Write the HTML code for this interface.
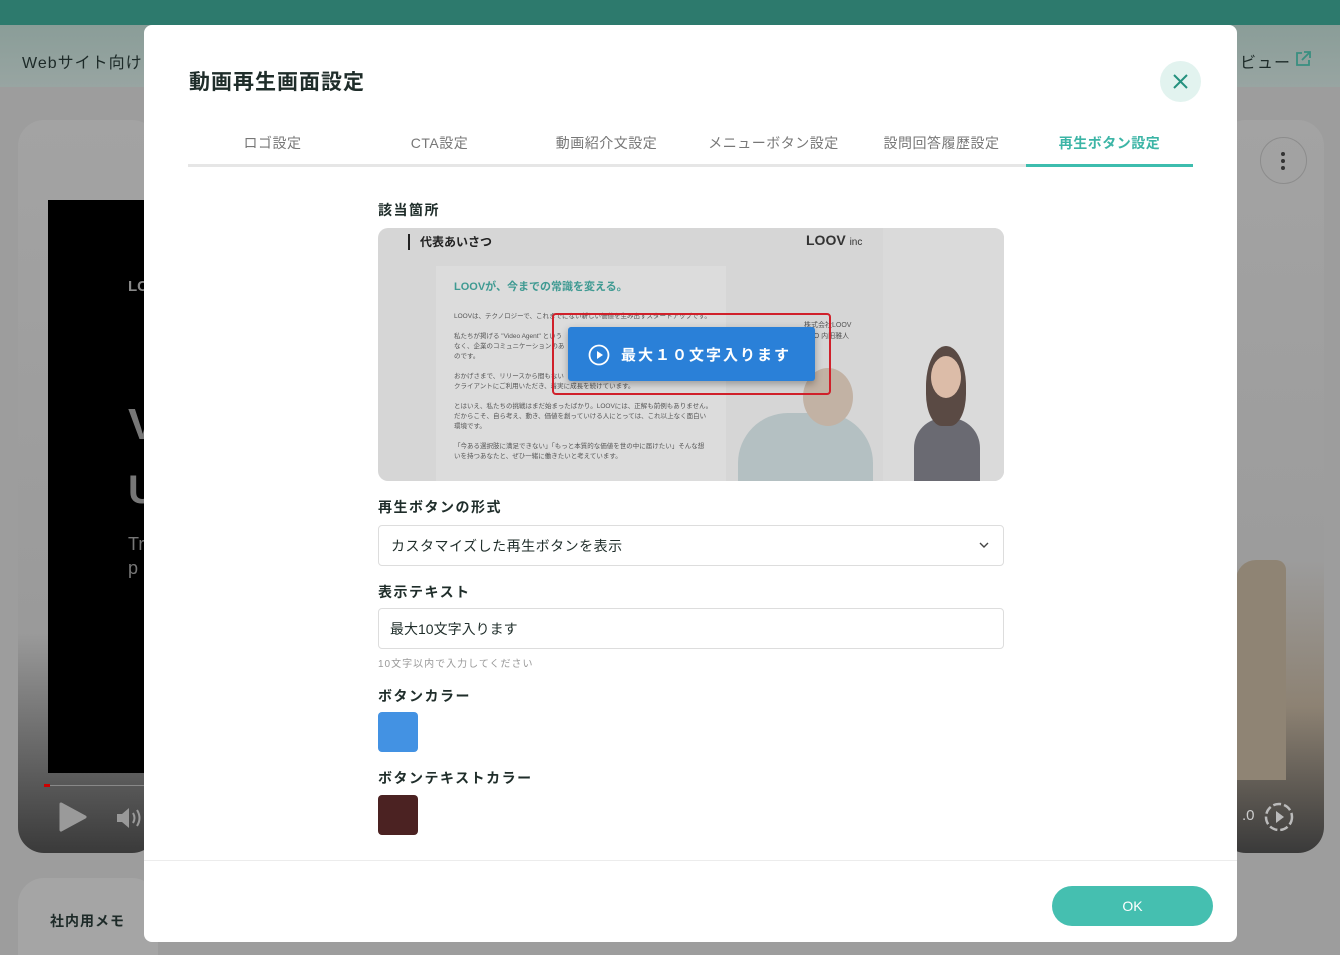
<!DOCTYPE html>
<html><head><meta charset="utf-8"><style>
*{margin:0;padding:0;box-sizing:border-box}
html,body{width:1340px;height:955px;overflow:hidden}
body{background:#9d9d9d;font-family:"Liberation Sans","Noto Sans CJK JP",sans-serif;position:relative;color:#1f2d2a}
.a{position:absolute}
.lbl{position:absolute;left:378px;font-size:14px;font-weight:bold;letter-spacing:1.5px;color:#1f2d2a}
.tab{position:absolute;top:133px;font-size:14px;color:#777;text-align:center;width:167px;letter-spacing:.5px}
</style></head><body>
<div class="a" style="left:0;top:0;width:1340px;height:25px;background:#2d7a6d"></div>
<div class="a" style="left:0;top:25px;width:1340px;height:62px;background:linear-gradient(#8a9d98,#98a5a2)"></div>
<div class="a" style="left:22px;top:49px;font-size:16px;color:#1d2a28;letter-spacing:1px">Webサイト向け</div>
<div class="a" style="left:1240px;top:49px;font-size:16px;color:#1d2a28;letter-spacing:1px">ビュー</div>
<svg class="a" style="left:1294px;top:50px" width="18" height="18" viewBox="0 0 18 18" fill="none" stroke="#3a8f80" stroke-width="1.8"><path d="M8 3H3v12h12v-5M10 2h6v6M16 2L8 10"/></svg>
<div class="a" style="left:18px;top:120px;width:140px;height:733px;border-radius:26px;background:linear-gradient(#a3a3a3 0,#9a9a9a 70%,#3a3a3a 100%)"></div>
<div class="a" style="left:48px;top:200px;width:100px;height:573px;background:#000"></div>
<div class="a" style="left:128px;top:278px;color:#888;font-weight:bold;font-size:15px">LC</div>
<div class="a" style="left:128px;top:400px;color:#777;font-weight:bold;font-size:44px">V</div>
<div class="a" style="left:128px;top:468px;color:#777;font-weight:bold;font-size:40px">U</div>
<div class="a" style="left:128px;top:532px;color:#777;font-size:18px;line-height:24px">Tr<br>p</div>
<div class="a" style="left:44px;top:784px;width:6px;height:3px;background:#c00"></div>
<div class="a" style="left:50px;top:785px;width:100px;height:1px;background:#888"></div>
<svg class="a" style="left:58px;top:802px" width="30" height="30"><path d="M3 2L27 15L3 28Z" fill="#9a9a9a" stroke="#9a9a9a" stroke-linejoin="round" stroke-width="3"/></svg>
<svg class="a" style="left:115px;top:805px" width="30" height="26"><path d="M2 9h5l7-6v20l-7-6H2Z" fill="#999"/><path d="M18 8q3 5 0 10M22 5q5 8 0 16" stroke="#999" stroke-width="2" fill="none"/></svg>
<div class="a" style="left:18px;top:878px;width:140px;height:77px;border-radius:26px 26px 0 0;background:#a5a5a5"></div>
<div class="a" style="left:50px;top:911px;font-size:14px;font-weight:bold;color:#1d2a28;letter-spacing:1px">社内用メモ</div>
<div class="a" style="left:1220px;top:120px;width:104px;height:733px;border-radius:26px;background:linear-gradient(#a3a3a3 0,#9c9c9c 60%,#8d8273 80%,#3a3a3a 100%)"></div>
<div class="a" style="left:1236px;top:560px;width:50px;height:220px;background:#8f8474;border-radius:20px 10px 0 0"></div>
<div class="a" style="left:1260px;top:137px;width:47px;height:47px;border-radius:50%;border:1px solid #8c8c8c"></div>
<div class="a" style="left:1281px;top:152px;width:4px;height:4px;border-radius:50%;background:#333;box-shadow:0 7px 0 #333,0 14px 0 #333"></div>
<div class="a" style="left:1242px;top:807px;color:#ccc;font-size:15px">.0</div>
<svg class="a" style="left:1263px;top:801px" width="32" height="32"><circle cx="16" cy="16" r="13" fill="none" stroke="#bbb" stroke-width="2.5" stroke-dasharray="8 3"/><path d="M13 10l8 6-8 6z" fill="#bbb"/></svg>
<div class="a" style="left:144px;top:25px;width:1093px;height:917px;background:#fff;border-radius:8px"></div>
<div class="a" style="left:189px;top:66px;font-size:21px;font-weight:bold;color:#1f2d2a;letter-spacing:1px">動画再生画面設定</div>
<div class="a" style="left:1160px;top:61px;width:41px;height:41px;border-radius:50%;background:#e2f3ef"></div>
<svg class="a" style="left:1172px;top:73px" width="17" height="17"><path d="M2 2L15 15M15 2L2 15" stroke="#25917f" stroke-width="2"/></svg>
<div class="tab" style="left:189px">ロゴ設定</div>
<div class="tab" style="left:356px">CTA設定</div>
<div class="tab" style="left:523px">動画紹介文設定</div>
<div class="tab" style="left:690px">メニューボタン設定</div>
<div class="tab" style="left:858px">設問回答履歴設定</div>
<div class="tab" style="left:1026px;color:#3cb5a6;font-weight:bold">再生ボタン設定</div>
<div class="a" style="left:188px;top:164px;width:1005px;height:3px;background:#e6e6e6"></div>
<div class="a" style="left:1026px;top:164px;width:167px;height:3px;background:#3dbdae"></div>
<div class="lbl" style="top:200px">該当箇所</div>
<div class="a" style="left:378px;top:228px;width:626px;height:253px;border-radius:10px;background:#d6d6d6;overflow:hidden">
 <div class="a" style="left:505px;top:0;width:121px;height:253px;background:#dadada"></div>
 <div class="a" style="left:30px;top:6px;width:2px;height:16px;background:#222"></div>
 <div class="a" style="left:42px;top:5px;font-size:12px;font-weight:bold;color:#222">代表あいさつ</div>
 <div class="a" style="left:428px;top:4px;font-size:14px;font-weight:bold;color:#333">LOOV <span style="font-size:10px;font-weight:normal">inc</span></div>
 <div class="a" style="left:58px;top:38px;width:290px;height:215px;background:#dcdcdc"></div>
 <div class="a" style="left:76px;top:50px;font-size:11px;font-weight:bold;color:#3f9a92">LOOVが、今までの常識を変える。</div>
 <div class="a" style="left:76px;top:84px;font-size:6.5px;color:#555;line-height:10px;width:270px">LOOVは、テクノロジーで、これまでにない新しい価値を生み出すスタートアップです。<br><br>私たちが掲げる "Video Agent" という<br>なく、企業のコミュニケーションのあ<br>のです。<br><br>おかげさまで、リリースから間もない<br>クライアントにご利用いただき、着実に成長を続けています。<br><br>とはいえ、私たちの挑戦はまだ始まったばかり。LOOVには、正解も前例もありません。<br>だからこそ、自ら考え、動き、価値を創っていける人にとっては、これ以上なく面白い<br>環境です。<br><br>「今ある選択肢に満足できない」「もっと本質的な価値を世の中に届けたい」そんな想<br>いを持つあなたと、ぜひ一緒に働きたいと考えています。</div>
 <div class="a" style="left:426px;top:92px;font-size:7px;color:#555;line-height:11px">株式会社LOOV<br>CEO 内田雅人</div>
 <div class="a" style="left:360px;top:185px;width:135px;height:75px;background:#b4c0c2;border-radius:50px 50px 0 0"></div>
 <div class="a" style="left:425px;top:140px;width:50px;height:58px;background:#c2b2a4;border-radius:50%"></div>
 <div class="a" style="left:536px;top:190px;width:66px;height:70px;background:#6a6a72;border-radius:30px 30px 0 0"></div>
 <div class="a" style="left:548px;top:118px;width:40px;height:80px;background:#5a4a44;border-radius:50% 50% 40% 40%"></div>
 <div class="a" style="left:553px;top:128px;width:30px;height:42px;background:#dcbca8;border-radius:50%"></div>
 <div class="a" style="left:174px;top:85px;width:279px;height:82px;border:2px solid #d0202a;border-radius:4px"></div>
 <div class="a" style="left:190px;top:99px;width:247px;height:54px;background:#2a80d8;border-radius:3px;box-shadow:0 3px 8px rgba(0,0,0,.3)"></div>
 <svg class="a" style="left:210px;top:116px" width="22" height="22"><circle cx="11" cy="11" r="9.5" fill="none" stroke="#fff" stroke-width="1.8"/><path d="M9 7l6 4-6 4z" fill="#fff"/></svg>
 <div class="a" style="left:243px;top:116px;font-size:15px;font-weight:bold;color:#fff;letter-spacing:2px">最大１０文字入ります</div>
</div>
<div class="lbl" style="top:497px">再生ボタンの形式</div>
<div class="a" style="left:378px;top:525px;width:626px;height:41px;border:1px solid #ddd;border-radius:4px"></div>
<div class="a" style="left:391px;top:536px;font-size:14px;letter-spacing:.5px">カスタマイズした再生ボタンを表示</div>
<svg class="a" style="left:978px;top:540px" width="12" height="10"><path d="M2 3l4 4 4-4" stroke="#444" stroke-width="1.4" fill="none"/></svg>
<div class="lbl" style="top:582px">表示テキスト</div>
<div class="a" style="left:378px;top:608px;width:626px;height:41px;border:1px solid #ddd;border-radius:4px"></div>
<div class="a" style="left:390px;top:619px;font-size:14px">最大10文字入ります</div>
<div class="a" style="left:378px;top:655px;font-size:10px;color:#999;letter-spacing:1px">10文字以内で入力してください</div>
<div class="lbl" style="top:686px">ボタンカラー</div>
<div class="a" style="left:378px;top:712px;width:40px;height:40px;border-radius:4px;background:#4392e3"></div>
<div class="lbl" style="top:768px">ボタンテキストカラー</div>
<div class="a" style="left:378px;top:795px;width:40px;height:40px;border-radius:4px;background:#4b2222"></div>
<div class="a" style="left:144px;top:860px;width:1093px;height:1px;background:#ececec"></div>
<div class="a" style="left:1052px;top:886px;width:161px;height:40px;border-radius:20px;background:#45bfb0;color:#fff;font-size:14px;text-align:center;line-height:40px">OK</div>
</body></html>
